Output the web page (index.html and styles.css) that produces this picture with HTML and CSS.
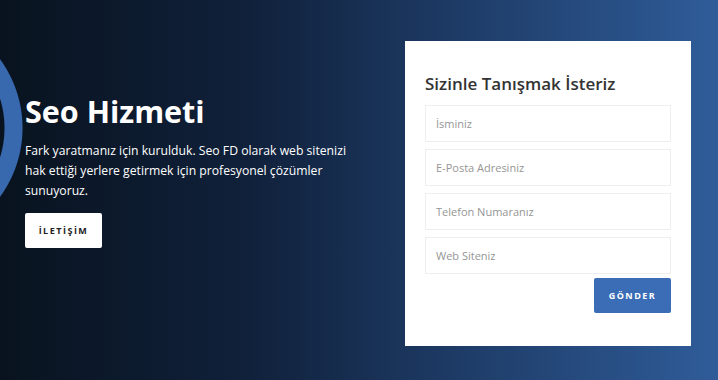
FILE: index.html
```html
<!DOCTYPE html>
<html lang="tr">

<head>
    <meta charset="UTF-8">
    <meta name="viewport" content="width=device-width, initial-scale=1.0">
    <title>Seo Hizmeti</title>
    <link rel="stylesheet" href="styles.css">
</head>

<body>
    <section class="hero">
        <!-- sol taraf: başlık ve açıklama -->
        <div class="intro">
            <h1>Seo Hizmeti</h1>
            <p>Fark yaratmanız için kurulduk. Seo FD olarak web sitenizi hak ettiği yerlere getirmek için profesyonel çözümler sunuyoruz.</p>
            <a class="btn-light" href="#">İLETİŞİM</a>
        </div>

        <!-- sağ taraf: iletişim formu -->
        <form class="contact-card">
            <h3>Sizinle Tanışmak İsteriz</h3>
            <input type="text" placeholder="İsminiz">
            <input type="email" placeholder="E-Posta Adresiniz">
            <input type="tel" placeholder="Telefon Numaranız">
            <input type="text" placeholder="Web Siteniz">
            <div class="actions">
                <button type="button">GÖNDER</button>
            </div>
        </form>
    </section>
</body>

</html>
```

FILE: styles.css
```css
body {
    margin: 0;
    font-family: "Open Sans", Arial, sans-serif;
}

.hero {
    width: 718px;
    height: 380px;
    box-sizing: border-box;
    padding: 41px 27px 0 25px;
    display: flex;
    justify-content: space-between;
    align-items: flex-start;
    background:
        radial-gradient(circle at -94px 128px, transparent 98px, #3868ad 99px, #3868ad 116px, transparent 117px),
        linear-gradient(90deg, #09131f 0%, #10213b 35%, #1c3861 60%, #2f5c99 100%);
}

.intro {
    width: 340px;
    padding-top: 50px;
}

.intro h1 {
    margin: 0 0 10px;
    font-size: 30.5px;
    font-weight: 700;
    line-height: 40px;
    color: #fff;
}

.intro p {
    margin: 0 0 12px;
    font-size: 12.2px;
    font-weight: 500;
    line-height: 20px;
    color: #fff;
}

.btn-light {
    display: inline-flex;
    align-items: center;
    justify-content: center;
    width: 77px;
    height: 35px;
    background: #fff;
    border-radius: 2px;
    color: #222;
    font-size: 9px;
    font-weight: 700;
    letter-spacing: 1.5px;
    text-decoration: none;
}

.contact-card {
    width: 286px;
    height: 305px;
    box-sizing: border-box;
    padding: 31px 20px 0;
    background: #fff;
    display: flex;
    flex-direction: column;
    gap: 7px;
}

.contact-card h3 {
    margin: 0 0 2px;
    font-size: 17px;
    font-weight: 600;
    line-height: 24px;
    color: #333;
}

.contact-card input {
    height: 37px;
    box-sizing: border-box;
    padding: 0 10px;
    border: 1px solid #eee;
    font-family: inherit;
    font-size: 11px;
    color: #333;
    outline: none;
}

.contact-card input::placeholder {
    color: #959595;
}

.actions {
    display: flex;
    justify-content: flex-end;
    margin-top: -3px;
}

.actions button {
    width: 77px;
    height: 35px;
    border: none;
    border-radius: 2px;
    background: #3a6db5;
    color: #fff;
    font-family: inherit;
    font-size: 9px;
    font-weight: 700;
    letter-spacing: 1.5px;
    cursor: pointer;
}
```
